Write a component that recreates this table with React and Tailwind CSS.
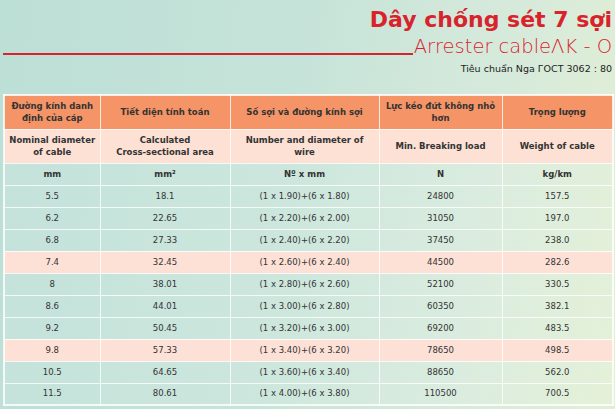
import React from 'react';

const rows = [
  ['5.5', '18.1', '(1 x 1.90)+(6 x 1.80)', '24800', '157.5'],
  ['6.2', '22.65', '(1 x 2.20)+(6 x 2.00)', '31050', '197.0'],
  ['6.8', '27.33', '(1 x 2.40)+(6 x 2.20)', '37450', '238.0'],
  ['7.4', '32.45', '(1 x 2.60)+(6 x 2.40)', '44500', '282.6', true],
  ['8', '38.01', '(1 x 2.80)+(6 x 2.60)', '52100', '330.5'],
  ['8.6', '44.01', '(1 x 3.00)+(6 x 2.80)', '60350', '382.1'],
  ['9.2', '50.45', '(1 x 3.20)+(6 x 3.00)', '69200', '483.5'],
  ['9.8', '57.33', '(1 x 3.40)+(6 x 3.20)', '78650', '498.5', true],
  ['10.5', '64.65', '(1 x 3.60)+(6 x 3.40)', '88650', '562.0'],
  ['11.5', '80.61', '(1 x 4.00)+(6 x 3.80)', '110500', '700.5'],
];

const widths = ['w-[96px]', 'w-[130px]', 'w-[149px]', 'w-[123px]', 'w-[111px]'];

const App = () => {
  return (
    <div
      className="w-[615px] h-[409px] overflow-hidden bg-[linear-gradient(100deg,#bcdfd6_0%,#c6e3d9_45%,#d6eadb_75%,#e2efd4_100%)] text-[#333]"
      style={{ fontFamily: '"DejaVu Sans", sans-serif' }}
    >
      {/* Title */}
      <div className="flex flex-col items-end pr-[3px] pt-[6px]">
        <h1 className="text-[22px] leading-[28px] font-bold text-[#d8232c]">Dây chống sét 7 sợi</h1>
        <div className="flex items-end w-full pl-[3px] mt-[2px]">
          <div className="flex-1 h-[2px] bg-[#d8232c] mb-[3px]" />
          <span className="text-[19.5px] leading-[22px] font-light text-[#d8232c] pl-[1px]">Arrester cableΛK - O</span>
        </div>
        <div className="text-[9.5px] leading-[12px] text-[#222] mt-[5px]">Tiêu chuẩn Nga ГОСТ 3062 : 80</div>
      </div>

      {/* Table */}
      <div className="pl-[3px] pt-[19px]">
        <table className="border-collapse border-2 border-white/80 text-center text-[8.5px]">
          <thead>
            <tr className="bg-[#f59466] h-[34px]">
              <th className={`${widths[0]} border border-white/80 font-semibold px-1 leading-[12px]`}>Đường kính danh định của cáp</th>
              <th className={`${widths[1]} border border-white/80 font-semibold px-1`}>Tiết diện tính toán</th>
              <th className={`${widths[2]} border border-white/80 font-semibold px-1`}>Số sợi và đường kính sợi</th>
              <th className={`${widths[3]} border border-white/80 font-semibold px-1 leading-[12px]`}>Lực kéo đứt không nhỏ hơn</th>
              <th className={`${widths[4]} border border-white/80 font-semibold px-1`}>Trọng lượng</th>
            </tr>
            <tr className="bg-[#fde1d4] h-[34px]">
              <th className="border border-white/80 font-semibold px-1 leading-[12px]">Nominal diameter of cable</th>
              <th className="border border-white/80 font-semibold px-1 leading-[12px]">Calculated<br />Cross-sectional area</th>
              <th className="border border-white/80 font-semibold px-1 leading-[12px]">Number and diameter of wire</th>
              <th className="border border-white/80 font-semibold px-1">Min. Breaking load</th>
              <th className="border border-white/80 font-semibold px-1">Weight of cable</th>
            </tr>
            <tr className="bg-white/10 h-[22px]">
              <th className="border border-white/80 font-semibold">mm</th>
              <th className="border border-white/80 font-semibold">mm²</th>
              <th className="border border-white/80 font-semibold">Nº x mm</th>
              <th className="border border-white/80 font-semibold">N</th>
              <th className="border border-white/80 font-semibold">kg/km</th>
            </tr>
          </thead>
          <tbody>
            {rows.map((r) => (
              <tr key={r[0]} className={r[5] ? 'bg-[#fde1d6] h-[22px]' : 'bg-white/10 h-[22px]'}>
                {r.slice(0, 5).map((c, i) => (
                  <td key={i} className="border border-white/80 font-normal">{c}</td>
                ))}
              </tr>
            ))}
          </tbody>
        </table>
      </div>
    </div>
  );
};

export default App;
